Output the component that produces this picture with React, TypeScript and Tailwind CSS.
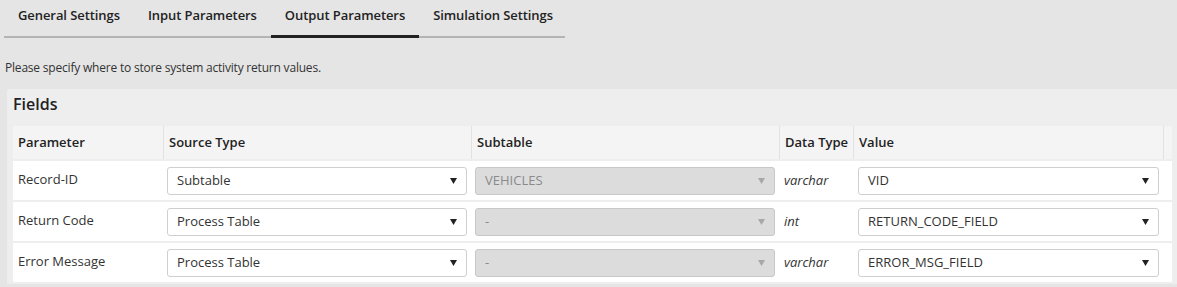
import React from "react";

const tabs = ["General Settings", "Input Parameters", "Output Parameters", "Simulation Settings"];

type Row = { param: string; source: string; sub: string; type: string; value: string };
const rows: Row[] = [
  { param: "Record-ID", source: "Subtable", sub: "VEHICLES", type: "varchar", value: "VID" },
  { param: "Return Code", source: "Process Table", sub: "-", type: "int", value: "RETURN_CODE_FIELD" },
  { param: "Error Message", source: "Process Table", sub: "-", type: "varchar", value: "ERROR_MSG_FIELD" },
];

function Select({ text, disabled }: { text: string; disabled?: boolean }) {
  return (
    <div
      className={
        "flex h-[28px] items-center justify-between rounded-[3px] border pl-[9px] pr-[9px] " +
        (disabled ? "border-[#c8c8c8] bg-[#dcdcdc] text-[#8a8a8a]" : "border-[#cfcfcf] bg-white text-[#333]")
      }
    >
      <span className="pt-[1px]">{text}</span>
      <svg width="7" height="7" viewBox="0 0 7 7">
        <path d="M0 1 L7 1 L3.5 7 Z" fill={disabled ? "#a8a8a8" : "#222"} />
      </svg>
    </div>
  );
}

export default function App() {
  return (
    <div
      className="h-[287px] w-[1177px] overflow-hidden bg-[#e5e5e5] text-[13px] text-[#333]"
      style={{ fontFamily: '"Open Sans", "Liberation Sans", sans-serif' }}
    >
      <div className="ml-[4px] flex w-[561px] border-b-[2px] border-[#b4b4b4] pt-[1px]">
        {tabs.map((t, i) => (
          <div
            key={t}
            className="relative h-[35px] shrink-0 whitespace-nowrap px-[14px] pt-[5px] font-semibold tracking-[-0.08px] text-[#222]"
          >
            {t}
            {i === 2 && <div className="absolute bottom-[-2px] left-[0px] right-[0px] h-[3px] bg-[#222]" />}
          </div>
        ))}
      </div>
      <div className="pl-[5px] pt-[22px] text-[12px] leading-[16px] tracking-[-0.2px] text-[#333]">
        Please specify where to store system activity return values.
      </div>
      <div className="ml-[7px] mt-[13px] h-[195px] rounded-tl-[3px] bg-[#eeeeee] pl-[6px] pr-[5px]">
        <div className="pt-[4px] text-[16px] font-semibold leading-[22px] text-[#222]">Fields</div>
        <div className="mt-[11px]">
          <div className="flex h-[33px] items-center bg-[#f4f4f4] font-semibold text-[#222]">
            <div className="w-[150px] pl-[5px]">Parameter</div>
            <div className="h-full w-[308px] border-l border-[#e2e2e2] pl-[5px] leading-[33px]">Source Type</div>
            <div className="h-full w-[308px] border-l border-[#e2e2e2] pl-[5px] leading-[33px]">Subtable</div>
            <div className="h-full w-[74px] border-l border-[#e2e2e2] pl-[5px] leading-[33px]">Data Type</div>
            <div className="h-full w-[310px] border-l border-[#e2e2e2] pl-[5px] leading-[33px]">Value</div>
            <div className="h-full flex-1 border-l border-[#e2e2e2]" />
          </div>
          {rows.map((r) => (
            <div key={r.param} className="flex h-[41px] items-center border-t-[2px] border-[#eeeeee] bg-white first:border-t-0">
              <div className="w-[150px] pl-[5px] pb-[1px]">{r.param}</div>
              <div className="w-[308px] pl-[4px] pr-[4px]">
                <Select text={r.source} />
              </div>
              <div className="w-[308px] pl-[4px] pr-[4px]">
                <Select text={r.sub} disabled />
              </div>
              <div className="w-[74px] pl-[5px] italic">{r.type}</div>
              <div className="w-[310px] pl-[5px] pr-[4px]">
                <Select text={r.value} />
              </div>
              <div className="flex-1" />
            </div>
          ))}
        </div>
      </div>
    </div>
  );
}
